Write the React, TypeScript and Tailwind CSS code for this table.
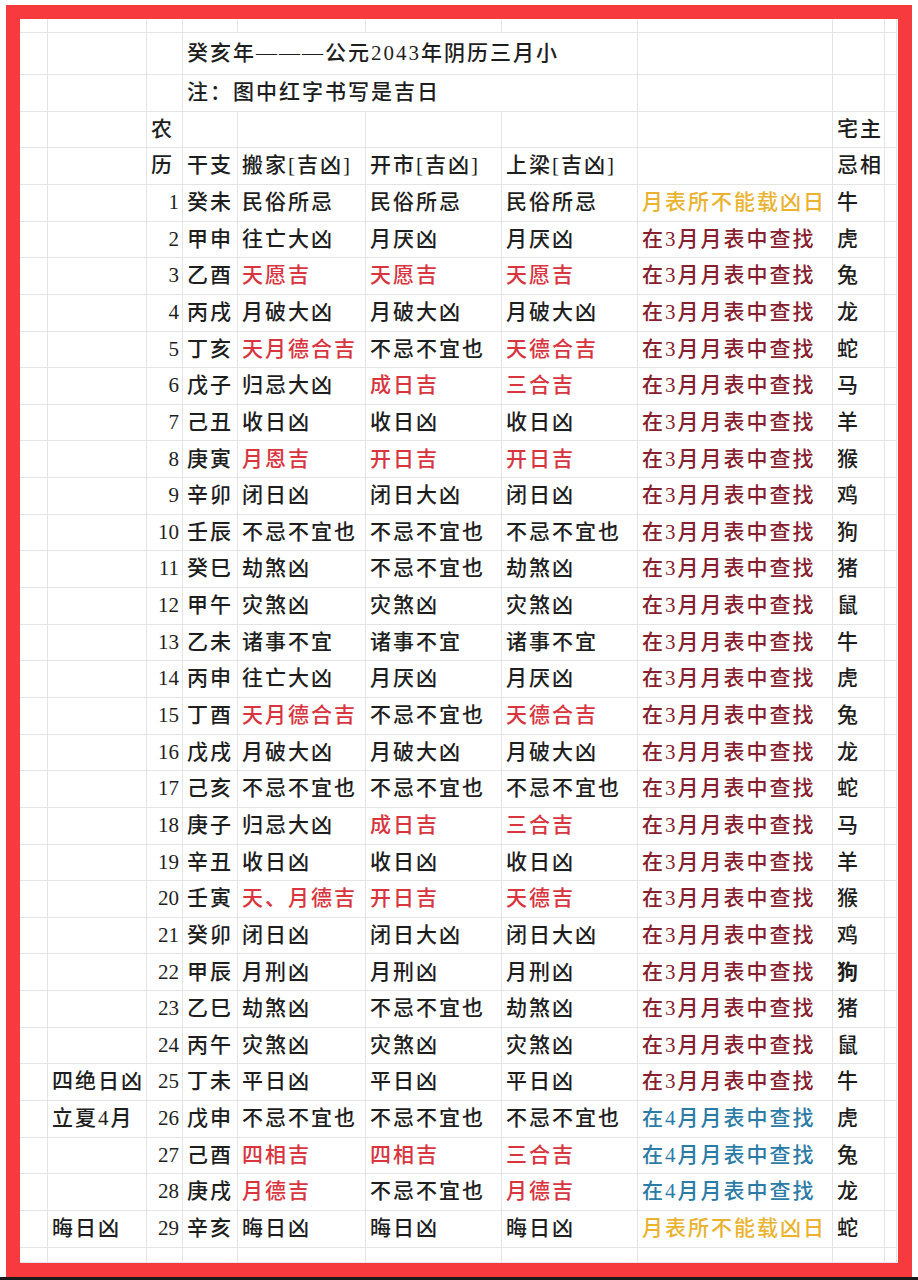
type Tone = 'k' | 'r' | 'm' | 'b' | 'y'

interface Day {
  n: number
  gz: string
  move: [string, Tone]
  open: [string, Tone]
  beam: [string, Tone]
  look: [string, Tone]
  zodiac: string
  note?: string
}

const toneClass: Record<Tone, string> = {
  k: 'text-[#1e1e1e]',
  r: 'text-[#d9353f]',
  m: 'text-[#86202e]',
  b: 'text-[#2c7ba6]',
  y: 'text-[#eab22f]',
}

const M3: [string, Tone] = ['在3月月表中查找', 'm']
const M4: [string, Tone] = ['在4月月表中查找', 'b']
const NONE: [string, Tone] = ['月表所不能载凶日', 'y']
const k = (s: string): [string, Tone] => [s, 'k']
const r = (s: string): [string, Tone] => [s, 'r']

const days: Day[] = [
  { n: 1, gz: '癸未', move: k('民俗所忌'), open: k('民俗所忌'), beam: k('民俗所忌'), look: NONE, zodiac: '牛' },
  { n: 2, gz: '甲申', move: k('往亡大凶'), open: k('月厌凶'), beam: k('月厌凶'), look: M3, zodiac: '虎' },
  { n: 3, gz: '乙酉', move: r('天愿吉'), open: r('天愿吉'), beam: r('天愿吉'), look: M3, zodiac: '兔' },
  { n: 4, gz: '丙戌', move: k('月破大凶'), open: k('月破大凶'), beam: k('月破大凶'), look: M3, zodiac: '龙' },
  { n: 5, gz: '丁亥', move: r('天月德合吉'), open: k('不忌不宜也'), beam: r('天德合吉'), look: M3, zodiac: '蛇' },
  { n: 6, gz: '戊子', move: k('归忌大凶'), open: r('成日吉'), beam: r('三合吉'), look: M3, zodiac: '马' },
  { n: 7, gz: '己丑', move: k('收日凶'), open: k('收日凶'), beam: k('收日凶'), look: M3, zodiac: '羊' },
  { n: 8, gz: '庚寅', move: r('月恩吉'), open: r('开日吉'), beam: r('开日吉'), look: M3, zodiac: '猴' },
  { n: 9, gz: '辛卯', move: k('闭日凶'), open: k('闭日大凶'), beam: k('闭日凶'), look: M3, zodiac: '鸡' },
  { n: 10, gz: '壬辰', move: k('不忌不宜也'), open: k('不忌不宜也'), beam: k('不忌不宜也'), look: M3, zodiac: '狗' },
  { n: 11, gz: '癸巳', move: k('劫煞凶'), open: k('不忌不宜也'), beam: k('劫煞凶'), look: M3, zodiac: '猪' },
  { n: 12, gz: '甲午', move: k('灾煞凶'), open: k('灾煞凶'), beam: k('灾煞凶'), look: M3, zodiac: '鼠' },
  { n: 13, gz: '乙未', move: k('诸事不宜'), open: k('诸事不宜'), beam: k('诸事不宜'), look: M3, zodiac: '牛' },
  { n: 14, gz: '丙申', move: k('往亡大凶'), open: k('月厌凶'), beam: k('月厌凶'), look: M3, zodiac: '虎' },
  { n: 15, gz: '丁酉', move: r('天月德合吉'), open: k('不忌不宜也'), beam: r('天德合吉'), look: M3, zodiac: '兔' },
  { n: 16, gz: '戊戌', move: k('月破大凶'), open: k('月破大凶'), beam: k('月破大凶'), look: M3, zodiac: '龙' },
  { n: 17, gz: '己亥', move: k('不忌不宜也'), open: k('不忌不宜也'), beam: k('不忌不宜也'), look: M3, zodiac: '蛇' },
  { n: 18, gz: '庚子', move: k('归忌大凶'), open: r('成日吉'), beam: r('三合吉'), look: M3, zodiac: '马' },
  { n: 19, gz: '辛丑', move: k('收日凶'), open: k('收日凶'), beam: k('收日凶'), look: M3, zodiac: '羊' },
  { n: 20, gz: '壬寅', move: r('天、月德吉'), open: r('开日吉'), beam: r('天德吉'), look: M3, zodiac: '猴' },
  { n: 21, gz: '癸卯', move: k('闭日凶'), open: k('闭日大凶'), beam: k('闭日大凶'), look: M3, zodiac: '鸡' },
  { n: 22, gz: '甲辰', move: k('月刑凶'), open: k('月刑凶'), beam: k('月刑凶'), look: M3, zodiac: '狗' },
  { n: 23, gz: '乙巳', move: k('劫煞凶'), open: k('不忌不宜也'), beam: k('劫煞凶'), look: M3, zodiac: '猪' },
  { n: 24, gz: '丙午', move: k('灾煞凶'), open: k('灾煞凶'), beam: k('灾煞凶'), look: M3, zodiac: '鼠' },
  { n: 25, gz: '丁未', move: k('平日凶'), open: k('平日凶'), beam: k('平日凶'), look: M3, zodiac: '牛', note: '四绝日凶' },
  { n: 26, gz: '戊申', move: k('不忌不宜也'), open: k('不忌不宜也'), beam: k('不忌不宜也'), look: M4, zodiac: '虎', note: '立夏4月' },
  { n: 27, gz: '己酉', move: r('四相吉'), open: r('四相吉'), beam: r('三合吉'), look: M4, zodiac: '兔' },
  { n: 28, gz: '庚戌', move: r('月德吉'), open: k('不忌不宜也'), beam: r('月德吉'), look: M4, zodiac: '龙' },
  { n: 29, gz: '辛亥', move: k('晦日凶'), open: k('晦日凶'), beam: k('晦日凶'), look: NONE, zodiac: '蛇', note: '晦日凶' },
]

// one spreadsheet cell; text may spill over like in a sheet
function Cell({ children, className = '', right = false }: { children?: React.ReactNode; className?: string; right?: boolean }) {
  return (
    <div
      className={`flex items-center whitespace-nowrap border-r border-b border-[#e4e4e4] ${right ? 'justify-end pr-[3px]' : 'pl-[4px]'} ${className}`}
    >
      {children}
    </div>
  )
}

function Empty({ span = 1 }: { span?: number }) {
  const cls = span === 1 ? '' : span === 4 ? 'col-span-4' : 'col-span-2'
  return <Cell className={cls} />
}

export default function App() {
  return (
    <div className="w-[918px] h-[1280px] bg-white pt-[5px] pl-[6px] font-['Liberation_Serif','Noto_Sans_CJK_SC',sans-serif] text-[21px] tracking-[2px] font-medium text-[#1e1e1e] overflow-hidden">
      <div className="w-[906px] h-[1272px] border-[14px] border-[#f63a3d] bg-white">
        <div className="grid grid-cols-[28px_99px_36px_55px_128px_136px_136px_195px_52px_12px] grid-rows-[14px_42px_37px_36px_37px_repeat(29,36.655px)_15px]">
          {/* top partial row */}
          {Array.from({ length: 10 }).map((_, i) => (
            <Empty key={`t${i}`} />
          ))}

          {/* title */}
          <Empty />
          <Empty />
          <Empty />
          <Cell className="col-span-4">
            癸亥年———公元2043年阴历三月小
          </Cell>
          <Empty />
          <Empty />
          <Empty />

          <Empty />
          <Empty />
          <Empty />
          <Cell className="col-span-4">注：图中红字书写是吉日</Cell>
          <Empty />
          <Empty />
          <Empty />

          {/* header */}
          <Empty />
          <Empty />
          <Cell>农</Cell>
          <Empty />
          <Empty />
          <Empty />
          <Empty />
          <Empty />
          <Cell>宅主</Cell>
          <Empty />

          <Empty />
          <Empty />
          <Cell>历</Cell>
          <Cell>干支</Cell>
          <Cell>搬家[吉凶]</Cell>
          <Cell>开市[吉凶]</Cell>
          <Cell>上梁[吉凶]</Cell>
          <Empty />
          <Cell>忌相</Cell>
          <Empty />

          {days.map((d) => (
            <div key={d.n} className="contents">
              <Empty />
              <Cell>{d.note}</Cell>
              <Cell right>
                <span className="tracking-normal">{d.n}</span>
              </Cell>
              <Cell>{d.gz}</Cell>
              <Cell className={toneClass[d.move[1]]}>{d.move[0]}</Cell>
              <Cell className={toneClass[d.open[1]]}>{d.open[0]}</Cell>
              <Cell className={toneClass[d.beam[1]]}>{d.beam[0]}</Cell>
              <Cell className={toneClass[d.look[1]]}>{d.look[0]}</Cell>
              <Cell className={d.n === 22 ? 'font-bold' : ''}>{d.zodiac}</Cell>
              <Empty />
            </div>
          ))}

          {/* bottom partial row */}
          {Array.from({ length: 10 }).map((_, i) => (
            <Empty key={`b${i}`} />
          ))}
        </div>
      </div>
      <div className="h-[3px] -ml-[6px] mt-0 bg-[#1a1a1a]" />
    </div>
  )
}
